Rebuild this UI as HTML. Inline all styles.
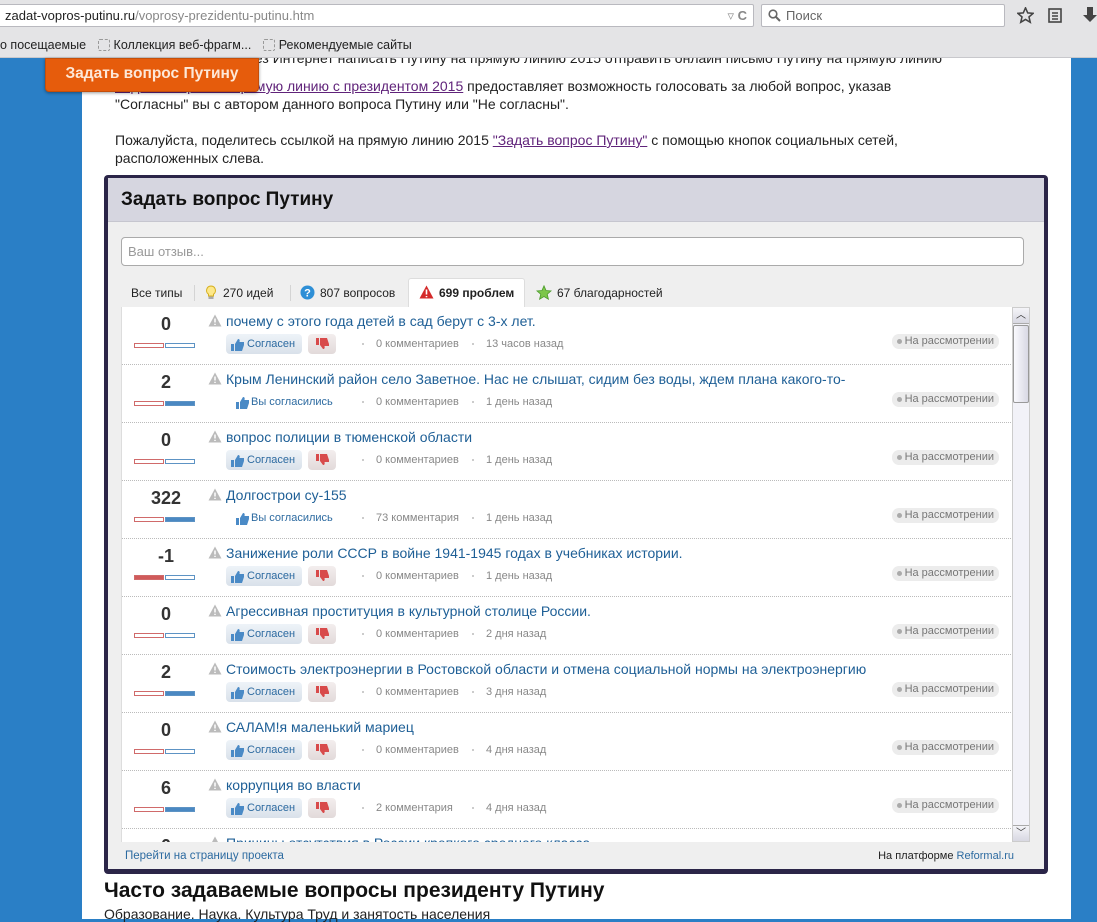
<!DOCTYPE html>
<html><head><meta charset="utf-8">
<style>
*{margin:0;padding:0;box-sizing:border-box}
body{width:1097px;height:919px;overflow:hidden;position:relative;background:#2a7fc6;font-family:"Liberation Sans","DejaVu Sans",sans-serif;color:#222}
.abs{position:absolute}
#chrome{left:0;top:0;width:1097px;height:58px;background:#e4e4e6;border-bottom:1px solid #c8c8cc;z-index:5}
#url{left:-2px;top:4px;width:756px;height:23px;background:#fff;border:1px solid #b9b9bf;border-radius:2px;font-size:13px;line-height:21px;padding-left:6px;color:#222;z-index:6}
#url span{color:#888}
#search{left:761px;top:4px;width:244px;height:23px;background:#fff;border:1px solid #b9b9bf;border-radius:2px;font-size:13px;line-height:21px;padding-left:24px;color:#666;z-index:6}
#bm{left:0;top:38px;font-size:12.5px;color:#222;white-space:nowrap;z-index:6}
.bmi{display:inline-block;width:12px;height:12px;border:1px dashed #999;border-radius:2px;vertical-align:-2px;margin:0 4px 0 8px}
#page{left:82px;top:58px;width:989px;height:861px;background:#fff}
#orange{left:45px;top:58px;width:214px;height:34px;background:#e65c0c;border:1px solid #c44e0a;border-radius:0 0 4px 4px;box-shadow:0 1px 3px rgba(0,0,0,.4);color:#fde8d8;font-weight:bold;font-size:15.5px;line-height:30px;text-align:center;z-index:7}
.p{font-size:14px;color:#222;line-height:18px}
.p a{color:#60237a;text-decoration:underline}
#w{left:104px;top:175px;width:944px;height:699px;background:#2b2548;border-radius:4px}
#wi{left:108px;top:178px;width:936px;height:691px;background:#efefef}
#wh{left:108px;top:178px;width:936px;height:44px;background:#d6d6e0;border-bottom:1px solid #c6c6cf;font-size:19px;font-weight:bold;line-height:44px;padding-left:13px;color:#111}
#inp{left:121px;top:237px;width:903px;height:29px;background:#fff;border:1px solid #aaa;border-radius:4px;font-size:13px;color:#999;line-height:27px;padding-left:6px}
.tab{top:278px;height:29px;font-size:12px;line-height:30px;color:#222;white-space:nowrap}
#tabact{left:408px;top:278px;width:117px;height:30px;background:#fff;border:1px solid #ddd;border-bottom:none;border-radius:3px 3px 0 0}
.sep{top:285px;width:1px;height:16px;background:#d4d4d4}
#list{left:121px;top:307px;width:891px;height:535px;background:#fff;border-left:1px solid #ddd;overflow:hidden}
.row{position:absolute;left:0;width:891px;height:58px;border-bottom:1px dotted #bbb}
.sc{position:absolute;left:0;width:88px;text-align:center;top:7px;font-size:18px;font-weight:bold;color:#333}
.bar{position:absolute;top:36px;height:5px;width:30px}
.bl{left:12px;border:1px solid #d06a6a}
.br{left:43px;border:1px solid #5d93c4}
.bl.f{background:#d05a5a}
.br.f{background:#4a88c2}
.ttl{position:absolute;left:86px;top:6px;font-size:14px;color:#1e5f96;white-space:nowrap}
.ttl svg{vertical-align:-1px;margin-right:4px}
.btn{position:absolute;left:104px;top:27px;width:76px;height:20px;background:linear-gradient(#eef3f8,#d9e1ea);border-radius:4px;font-size:11px;color:#2c6aa0;line-height:20px;padding-left:21px}
.dn{position:absolute;left:186px;top:27px;width:28px;height:20px;background:linear-gradient(#f3eeee,#e2dada);border-radius:4px}
.voted{position:absolute;left:109px;top:27px;font-size:11px;color:#2c6aa0;line-height:20px;padding-left:20px}
.thumb{position:absolute;left:4px;top:4px}
.meta{position:absolute;top:27px;font-size:11px;color:#888;line-height:20px}
.dot{position:absolute;top:36px;width:2px;height:2px;background:#ccc}
.st{position:absolute;right:14px;top:27px;height:15px;background:#ececec;border-radius:7px;font-size:11px;color:#777;line-height:15px;padding:0 5px 0 13px}
.st:before{content:"";position:absolute;left:5px;top:5px;width:5px;height:5px;border-radius:50%;background:#aaa}
#sb{left:1012px;top:307px;width:18px;height:535px;background:#f2f2f8;border:1px solid #ccc}
#foot{left:108px;top:845px;width:936px;height:24px;font-size:11.5px;line-height:22px}
</style></head><body>
<div id="chrome" class="abs"></div>
<div id="url" class="abs">zadat-vopros-putinu.ru<span>/voprosy-prezidentu-putinu.htm</span><span style="position:absolute;right:6px;top:0;color:#999">▿ <b style="color:#888">C</b></span></div>
<div id="search" class="abs"><svg class="abs" style="left:6px;top:4px" width="13" height="13" viewBox="0 0 13 13"><circle cx="5" cy="5" r="3.8" fill="none" stroke="#666" stroke-width="1.6"/><path d="M8 8l4 4" stroke="#666" stroke-width="2"/></svg>Поиск</div>
<svg class="abs" style="left:1017px;top:7px;z-index:6" width="17" height="17" viewBox="0 0 20 20"><path d="M10 1l2.6 6 6.4.5-4.9 4.2 1.5 6.3L10 14.6 4.4 18l1.5-6.3L1 7.5l6.4-.5z" fill="none" stroke="#444" stroke-width="1.8"/></svg>
<svg class="abs" style="left:1048px;top:8px;z-index:6" width="14" height="15" viewBox="0 0 14 15"><rect x="1" y="1" width="12" height="13" fill="none" stroke="#444" stroke-width="1.6"/><path d="M4 5h6M4 8h6M4 11h6" stroke="#444" stroke-width="1.4"/></svg>
<svg class="abs" style="left:1083px;top:7px;z-index:6" width="14" height="16" viewBox="0 0 14 16"><path d="M4 0h6v8h4l-7 7-7-7h4z" fill="#444"/></svg>
<div id="bm" class="abs">о посещаемые <span class="bmi"></span>Коллекция веб-фрагм... <span class="bmi"></span>Рекомендуемые сайты</div>
<div id="page" class="abs"></div>
<div class="abs p" style="left:230px;top:49px;width:800px;white-space:nowrap">Через Интернет написать Путину на прямую линию 2015 отправить онлайн письмо Путину на прямую линию</div>
<div class="abs p" style="left:115px;top:77px;width:900px"><a>Задать вопрос на прямую линию с президентом 2015</a> предоставляет возможность голосовать за любой вопрос, указав<br>"Согласны" вы с автором данного вопроса Путину или "Не согласны".</div>
<div class="abs p" style="left:115px;top:131px;width:900px">Пожалуйста, поделитесь ссылкой на прямую линию 2015 <a>"Задать вопрос Путину"</a> с помощью кнопок социальных сетей,<br>расположенных слева.</div>
<div id="orange" class="abs">Задать вопрос Путину</div>

<div id="w" class="abs"></div>
<div id="wi" class="abs"></div>
<div id="wh" class="abs">Задать вопрос Путину</div>
<div id="inp" class="abs">Ваш отзыв...</div>
<div id="tabact" class="abs"></div>
<div class="abs tab" style="left:131px">Все типы</div>
<div class="abs sep" style="left:194px"></div>
<div class="abs tab" style="left:205px"><svg width="12" height="15" viewBox="0 0 12 15" style="vertical-align:-3px;margin-right:6px"><path d="M6 1a4.5 4.5 0 0 0-2.5 8.2V11h5V9.2A4.5 4.5 0 0 0 6 1z" fill="#fde88a" stroke="#d6b020"/><rect x="3.5" y="11.5" width="5" height="2.5" fill="#aaa"/></svg>270 идей</div>
<div class="abs sep" style="left:290px"></div>
<div class="abs tab" style="left:300px"><svg width="15" height="15" viewBox="0 0 15 15" style="vertical-align:-3px;margin-right:5px"><circle cx="7.5" cy="7.5" r="7" fill="#2e8fd6"/><text x="7.5" y="11.5" font-size="11" font-weight="bold" fill="#fff" text-anchor="middle" font-family="Liberation Sans">?</text></svg>807 вопросов</div>
<div class="abs tab" style="left:419px;font-weight:bold"><svg width="15" height="14" viewBox="0 0 15 14" style="vertical-align:-2px;margin-right:5px"><path d="M7.5 0.5L14.5 13.5H0.5z" fill="#d42a2a"/><path d="M7.5 4.5v5M7.5 11v1.3" stroke="#fff" stroke-width="1.6"/></svg>699 проблем</div>
<div class="abs tab" style="left:536px"><svg width="16" height="15" viewBox="0 0 20 19" style="vertical-align:-3px;margin-right:5px"><path d="M10 1l2.6 6 6.4.5-4.9 4.2 1.5 6.3L10 14.6 4.4 18l1.5-6.3L1 7.5l6.4-.5z" fill="#7cc64a" stroke="#4a9a2a"/></svg>67 благодарностей</div>

<div id="list" class="abs">
<div class="row" style="top:0"><div class="sc">0</div><div class="bar bl"></div><div class="bar br"></div><div class="ttl"><svg width="14" height="13" viewBox="0 0 14 13"><path d="M7 .5L13.5 12.5H.5z" fill="#bbb"/><path d="M7 4.5v4M7 9.8v1.2" stroke="#fff" stroke-width="1.5"/></svg>почему с этого года детей в сад берут с 3-х лет.</div><div class="btn"><svg class="thumb" width="15" height="13" viewBox="0 0 15 13"><path d="M1 6h3v7H1zM5 6l3-5c1.5 0 2 1 1.5 3H14v3l-2 6H5z" fill="#4a8ac6"/></svg>Согласен</div><div class="dn"><svg style="position:absolute;left:7px;top:3px" width="14" height="14" viewBox="0 0 14 14"><path d="M1 1h3v7H1zM5 1h7l2 6v2H9.5c.5 2 0 3-1.5 3L5 8z" fill="#d84a4a"/></svg></div><div class="dot" style="left:240px"></div><div class="meta" style="left:254px">0 комментариев</div><div class="dot" style="left:350px"></div><div class="meta" style="left:364px">13 часов назад</div><div class="st">На рассмотрении</div></div>

<div class="row" style="top:58px"><div class="sc">2</div><div class="bar bl"></div><div class="bar br f"></div><div class="ttl"><svg width="14" height="13" viewBox="0 0 14 13"><path d="M7 .5L13.5 12.5H.5z" fill="#bbb"/><path d="M7 4.5v4M7 9.8v1.2" stroke="#fff" stroke-width="1.5"/></svg>Крым Ленинский район село Заветное. Нас не слышат, сидим без воды, ждем плана какого-то-</div><div class="voted"><svg class="thumb" width="15" height="13" viewBox="0 0 15 13"><path d="M1 6h3v7H1zM5 6l3-5c1.5 0 2 1 1.5 3H14v3l-2 6H5z" fill="#4a8ac6"/></svg>Вы согласились</div><div class="dot" style="left:240px"></div><div class="meta" style="left:254px">0 комментариев</div><div class="dot" style="left:350px"></div><div class="meta" style="left:364px">1 день назад</div><div class="st">На рассмотрении</div></div>

<div class="row" style="top:116px"><div class="sc">0</div><div class="bar bl"></div><div class="bar br"></div><div class="ttl"><svg width="14" height="13" viewBox="0 0 14 13"><path d="M7 .5L13.5 12.5H.5z" fill="#bbb"/><path d="M7 4.5v4M7 9.8v1.2" stroke="#fff" stroke-width="1.5"/></svg>вопрос полиции в тюменской области</div><div class="btn"><svg class="thumb" width="15" height="13" viewBox="0 0 15 13"><path d="M1 6h3v7H1zM5 6l3-5c1.5 0 2 1 1.5 3H14v3l-2 6H5z" fill="#4a8ac6"/></svg>Согласен</div><div class="dn"><svg style="position:absolute;left:7px;top:3px" width="14" height="14" viewBox="0 0 14 14"><path d="M1 1h3v7H1zM5 1h7l2 6v2H9.5c.5 2 0 3-1.5 3L5 8z" fill="#d84a4a"/></svg></div><div class="dot" style="left:240px"></div><div class="meta" style="left:254px">0 комментариев</div><div class="dot" style="left:350px"></div><div class="meta" style="left:364px">1 день назад</div><div class="st">На рассмотрении</div></div>

<div class="row" style="top:174px"><div class="sc">322</div><div class="bar bl"></div><div class="bar br f"></div><div class="ttl"><svg width="14" height="13" viewBox="0 0 14 13"><path d="M7 .5L13.5 12.5H.5z" fill="#bbb"/><path d="M7 4.5v4M7 9.8v1.2" stroke="#fff" stroke-width="1.5"/></svg>Долгострои су-155</div><div class="voted"><svg class="thumb" width="15" height="13" viewBox="0 0 15 13"><path d="M1 6h3v7H1zM5 6l3-5c1.5 0 2 1 1.5 3H14v3l-2 6H5z" fill="#4a8ac6"/></svg>Вы согласились</div><div class="dot" style="left:240px"></div><div class="meta" style="left:254px">73 комментария</div><div class="dot" style="left:350px"></div><div class="meta" style="left:364px">1 день назад</div><div class="st">На рассмотрении</div></div>

<div class="row" style="top:232px"><div class="sc">-1</div><div class="bar bl f"></div><div class="bar br"></div><div class="ttl"><svg width="14" height="13" viewBox="0 0 14 13"><path d="M7 .5L13.5 12.5H.5z" fill="#bbb"/><path d="M7 4.5v4M7 9.8v1.2" stroke="#fff" stroke-width="1.5"/></svg>Занижение роли СССР в войне 1941-1945 годах в учебниках истории.</div><div class="btn"><svg class="thumb" width="15" height="13" viewBox="0 0 15 13"><path d="M1 6h3v7H1zM5 6l3-5c1.5 0 2 1 1.5 3H14v3l-2 6H5z" fill="#4a8ac6"/></svg>Согласен</div><div class="dn"><svg style="position:absolute;left:7px;top:3px" width="14" height="14" viewBox="0 0 14 14"><path d="M1 1h3v7H1zM5 1h7l2 6v2H9.5c.5 2 0 3-1.5 3L5 8z" fill="#d84a4a"/></svg></div><div class="dot" style="left:240px"></div><div class="meta" style="left:254px">0 комментариев</div><div class="dot" style="left:350px"></div><div class="meta" style="left:364px">1 день назад</div><div class="st">На рассмотрении</div></div>

<div class="row" style="top:290px"><div class="sc">0</div><div class="bar bl"></div><div class="bar br"></div><div class="ttl"><svg width="14" height="13" viewBox="0 0 14 13"><path d="M7 .5L13.5 12.5H.5z" fill="#bbb"/><path d="M7 4.5v4M7 9.8v1.2" stroke="#fff" stroke-width="1.5"/></svg>Агрессивная проституция в культурной столице России.</div><div class="btn"><svg class="thumb" width="15" height="13" viewBox="0 0 15 13"><path d="M1 6h3v7H1zM5 6l3-5c1.5 0 2 1 1.5 3H14v3l-2 6H5z" fill="#4a8ac6"/></svg>Согласен</div><div class="dn"><svg style="position:absolute;left:7px;top:3px" width="14" height="14" viewBox="0 0 14 14"><path d="M1 1h3v7H1zM5 1h7l2 6v2H9.5c.5 2 0 3-1.5 3L5 8z" fill="#d84a4a"/></svg></div><div class="dot" style="left:240px"></div><div class="meta" style="left:254px">0 комментариев</div><div class="dot" style="left:350px"></div><div class="meta" style="left:364px">2 дня назад</div><div class="st">На рассмотрении</div></div>

<div class="row" style="top:348px"><div class="sc">2</div><div class="bar bl"></div><div class="bar br f"></div><div class="ttl"><svg width="14" height="13" viewBox="0 0 14 13"><path d="M7 .5L13.5 12.5H.5z" fill="#bbb"/><path d="M7 4.5v4M7 9.8v1.2" stroke="#fff" stroke-width="1.5"/></svg>Стоимость электроэнергии в Ростовской области и отмена социальной нормы на электроэнергию</div><div class="btn"><svg class="thumb" width="15" height="13" viewBox="0 0 15 13"><path d="M1 6h3v7H1zM5 6l3-5c1.5 0 2 1 1.5 3H14v3l-2 6H5z" fill="#4a8ac6"/></svg>Согласен</div><div class="dn"><svg style="position:absolute;left:7px;top:3px" width="14" height="14" viewBox="0 0 14 14"><path d="M1 1h3v7H1zM5 1h7l2 6v2H9.5c.5 2 0 3-1.5 3L5 8z" fill="#d84a4a"/></svg></div><div class="dot" style="left:240px"></div><div class="meta" style="left:254px">0 комментариев</div><div class="dot" style="left:350px"></div><div class="meta" style="left:364px">3 дня назад</div><div class="st">На рассмотрении</div></div>

<div class="row" style="top:406px"><div class="sc">0</div><div class="bar bl"></div><div class="bar br"></div><div class="ttl"><svg width="14" height="13" viewBox="0 0 14 13"><path d="M7 .5L13.5 12.5H.5z" fill="#bbb"/><path d="M7 4.5v4M7 9.8v1.2" stroke="#fff" stroke-width="1.5"/></svg>САЛАМ!я маленький мариец</div><div class="btn"><svg class="thumb" width="15" height="13" viewBox="0 0 15 13"><path d="M1 6h3v7H1zM5 6l3-5c1.5 0 2 1 1.5 3H14v3l-2 6H5z" fill="#4a8ac6"/></svg>Согласен</div><div class="dn"><svg style="position:absolute;left:7px;top:3px" width="14" height="14" viewBox="0 0 14 14"><path d="M1 1h3v7H1zM5 1h7l2 6v2H9.5c.5 2 0 3-1.5 3L5 8z" fill="#d84a4a"/></svg></div><div class="dot" style="left:240px"></div><div class="meta" style="left:254px">0 комментариев</div><div class="dot" style="left:350px"></div><div class="meta" style="left:364px">4 дня назад</div><div class="st">На рассмотрении</div></div>

<div class="row" style="top:464px"><div class="sc">6</div><div class="bar bl"></div><div class="bar br f"></div><div class="ttl"><svg width="14" height="13" viewBox="0 0 14 13"><path d="M7 .5L13.5 12.5H.5z" fill="#bbb"/><path d="M7 4.5v4M7 9.8v1.2" stroke="#fff" stroke-width="1.5"/></svg>коррупция во власти</div><div class="btn"><svg class="thumb" width="15" height="13" viewBox="0 0 15 13"><path d="M1 6h3v7H1zM5 6l3-5c1.5 0 2 1 1.5 3H14v3l-2 6H5z" fill="#4a8ac6"/></svg>Согласен</div><div class="dn"><svg style="position:absolute;left:7px;top:3px" width="14" height="14" viewBox="0 0 14 14"><path d="M1 1h3v7H1zM5 1h7l2 6v2H9.5c.5 2 0 3-1.5 3L5 8z" fill="#d84a4a"/></svg></div><div class="dot" style="left:240px"></div><div class="meta" style="left:254px">2 комментария</div><div class="dot" style="left:350px"></div><div class="meta" style="left:364px">4 дня назад</div><div class="st">На рассмотрении</div></div>

<div class="row" style="top:522px;border:none"><div class="sc">0</div><div class="ttl"><svg width="14" height="13" viewBox="0 0 14 13"><path d="M7 .5L13.5 12.5H.5z" fill="#bbb"/></svg>Причины отсутствия в России крепкого среднего класса</div></div>
</div>
<div id="sb" class="abs">
<div class="abs" style="left:0;top:0;width:16px;height:16px;background:linear-gradient(#f4f4f8,#d8d8e2);border-bottom:1px solid #aaa;font-size:10px;text-align:center;line-height:16px;color:#333">︿</div>
<div class="abs" style="left:0;top:17px;width:16px;height:78px;background:linear-gradient(90deg,#fafafe,#d8d8e4);border:1px solid #999;border-radius:2px"></div>
<div class="abs" style="left:0;bottom:0;width:16px;height:16px;background:linear-gradient(#f4f4f8,#d8d8e2);border-top:1px solid #aaa;font-size:10px;text-align:center;line-height:16px;color:#333">﹀</div>
</div>
<div id="foot" class="abs"><span style="position:absolute;left:17px;color:#2c6aa0">Перейти на страницу проекта</span><span style="position:absolute;right:30px;color:#222;font-size:11px">На платформе <span style="color:#2c6aa0">Reformal.ru</span></span></div>

<div class="abs" style="left:104px;top:879px;font-size:21px;font-weight:bold;color:#111">Часто задаваемые вопросы президенту Путину</div>
<div class="abs" style="left:104px;top:906px;font-size:14px;color:#222">Образование. Наука. Культура Труд и занятость населения</div>
</body></html>
